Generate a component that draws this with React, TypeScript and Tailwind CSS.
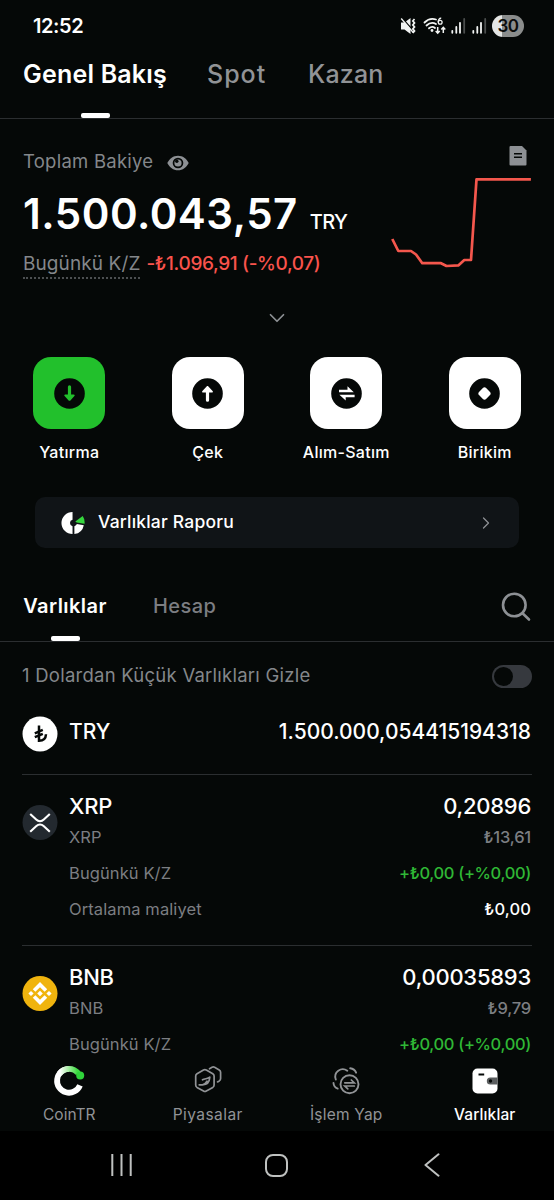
import React from 'react';
import { ChevronDown, ChevronRight } from 'lucide-react';

const actions = [
  { label: 'Yatırma', icon: 'down' },
  { label: 'Çek', icon: 'up' },
  { label: 'Alım-Satım', icon: 'swap' },
  { label: 'Birikim', icon: 'diamond' },
];

const assets = [
  { symbol: 'XRP', amount: '0,20896', value: '₺13,61', pnl: '+₺0,00 (+%0,00)', cost: '₺0,00' },
  { symbol: 'BNB', amount: '0,00035893', value: '₺9,79', pnl: '+₺0,00 (+%0,00)', cost: null },
];

const navItems = [
  { label: 'CoinTR', className: 'text-[#919396]' },
  { label: 'Piyasalar', className: 'tracking-[0.45px] text-[#919396]' },
  { label: 'İşlem Yap', className: 'tracking-[0.2px] text-[#919396]' },
  { label: 'Varlıklar', className: 'font-medium tracking-[0.1px] text-white' },
];

function StatusIcons() {
  return (
    <svg width="93" height="26" viewBox="0 0 93 26" fill="none">
      {/* Muted speaker */}
      <path d="M2 9.500h3.500l6-4.500v16L5.500 16.500H2z" fill="#f2f4f3" />
      <path d="M3.500 5.500l11 12.500" stroke="#050807" strokeWidth="1.500" />
      <path d="M2.200 5.500l12 14" stroke="#f2f4f3" strokeWidth="1.300" />
      <path d="M15.500 6l-1.700 1.900 1.700 2-1.700 2 1.700 2-1.700 2 1.700 2-1.700 2" stroke="#f2f4f3" strokeWidth="1.700" />
      {/* Wifi */}
      <path d="M25.500 9.500c3.500-3.500 7.500-4.300 11.500-3M27.500 12.500c3-2.800 6.500-3.300 9.500-1.500M30 15.300c1.800-1.500 4.200-1.700 6-.3" stroke="#f2f4f3" strokeWidth="1.800" strokeLinecap="round" />
      <circle cx="33" cy="17.500" r="1.400" fill="#f2f4f3" />
      <path d="M42.200 5.300c-2-.2-3 1.800-3 4" stroke="#f2f4f3" strokeWidth="1.400" />
      <circle cx="41.200" cy="9.300" r="1.900" stroke="#f2f4f3" strokeWidth="1.300" />
      <path d="M38.700 14v6M36.700 18l2 2.200 2-2.200M44.300 20v-5.500M42.300 16.500l2-2.200 2 2.200" stroke="#f2f4f3" strokeWidth="1.500" />
      {/* Signal bars */}
      <path d="M53.300 17.800v2M57.300 14v5.800M61 9.800v10" stroke="#f2f4f3" strokeWidth="1.800" strokeLinecap="round" />
      <path d="M65.200 6v13.800" stroke="#4b4e4d" strokeWidth="1.800" strokeLinecap="round" />
      <path d="M74.300 17.800v2M78.300 14v5.800M82 9.800v10" stroke="#f2f4f3" strokeWidth="1.800" strokeLinecap="round" />
      <path d="M86.200 6v13.800" stroke="#4b4e4d" strokeWidth="1.800" strokeLinecap="round" />
    </svg>
  );
}

function ActionGlyph({ icon }: { icon: string }) {
  const color = icon === 'down' ? '#22c02c' : '#ffffff';
  return (
    <svg width="31" height="31" viewBox="0 0 31 31" fill="none">
      <circle cx="15.500" cy="15.500" r="15.300" fill="#050807" />
      {icon === 'down' && (
        <path d="M13.900 8.800a1.500 1.500 0 0 1 3.200 0v7.700h2.600c1 0 1.300.9.700 1.600l-4 4.300c-.5.600-1.300.6-1.800 0l-4-4.300c-.6-.7-.3-1.600.7-1.600h2.600z" fill={color} />
      )}
      {icon === 'up' && (
        <path d="M13.900 22.200a1.500 1.500 0 0 0 3.200 0v-7.700h2.800c1 0 1.300-.9.700-1.600l-4.200-4.400c-.5-.6-1.300-.6-1.800 0l-4.200 4.400c-.6.7-.3 1.600.7 1.600h2.800z" fill={color} />
      )}
      {icon === 'swap' && (
        <path d="M8 11.700h8.500V8.300l6.300 5.900H8zM23.600 16.800H8.400l6.300 5.800V19.300h8.900z" fill={color} />
      )}
      {icon === 'diamond' && (
        <path d="M13.900 10l-3.900 3.900c-.9.900-.9 2.300 0 3.200l3.900 3.900c.9.900 2.300.9 3.200 0l3.900-3.900c.9-.9.900-2.300 0-3.200l-3.900-3.900c-.9-.9-2.300-.9-3.200 0z" fill={color} />
      )}
    </svg>
  );
}

function CoinIcon({ symbol }: { symbol: string }) {
  if (symbol === 'XRP') {
    return (
      <svg width="36" height="36" viewBox="0 0 36 36" fill="none">
        <circle cx="18" cy="17.500" r="17.500" fill="#23292f" />
        <path d="M8.200 9l6 5.600c2.200 2.100 5.400 2.100 7.600 0l6-5.600M8.200 26.700l6.200-5.700c2-1.900 5.200-1.900 7.200 0l6.200 5.700" stroke="#ffffff" strokeWidth="2.100" />
      </svg>
    );
  }
  if (symbol === 'BNB') {
    return (
      <svg width="36" height="36" viewBox="0 0 36 36" fill="#ffffff">
        <circle cx="18" cy="17.500" r="17.500" fill="#f0b40e" />
        <path d="M18 6l7.200 7.200-2.600 2.600-4.600-4.600-4.600 4.600-2.600-2.600zM18 29l-7.200-7.200 2.600-2.600 4.600 4.600 4.600-4.600 2.600 2.600zM18 14.700l2.800 2.800-2.800 2.800-2.800-2.800zM9 14.900l2.600 2.600L9 20.100l-2.600-2.600zM27 14.900l2.600 2.600-2.600 2.600-2.600-2.600z" />
      </svg>
    );
  }
  return (
    <svg width="36" height="36" viewBox="0 0 36 36" fill="none">
      <circle cx="18" cy="18" r="17.500" fill="#ffffff" />
      <path d="M17 9.500v15.300c4.500 0 6.800-2.300 7-6.500M12.800 17.300l8-3.400M12.800 21.200l8-3.400" stroke="#050807" strokeWidth="2.500" />
    </svg>
  );
}

function NavIcon({ name }: { name: string }) {
  if (name === 'CoinTR') {
    return (
      <svg width="32" height="32" viewBox="0 0 32 32" fill="none">
        <defs>
          <linearGradient id="ring" x1="7" y1="8" x2="24" y2="8" gradientUnits="userSpaceOnUse">
            <stop stopColor="#ffffff" />
            <stop offset="0.500" stopColor="#a6eea2" />
            <stop offset="1" stopColor="#3fdc43" />
          </linearGradient>
        </defs>
        <path d="M16 3.900a11.900 11.900 0 1 0 11 16.400" stroke="#ffffff" strokeWidth="5.800" />
        <path d="M6.500 8.500A11.900 11.900 0 0 1 25.300 8.300" stroke="url(#ring)" strokeWidth="5.800" />
        <circle cx="27.200" cy="10.600" r="4" fill="#2fd33a" />
      </svg>
    );
  }
  if (name === 'Piyasalar') {
    return (
      <svg width="32" height="32" viewBox="0 0 32 32" fill="none" stroke="#919396" strokeWidth="1.700" strokeLinecap="round" strokeLinejoin="round">
        <path d="M11.500 5.100q1.400-.8 2.800 0l6.500 3.700q1.300.8 1.300 2.300v9q0 1.500-1.300 2.300l-6.500 3.700q-1.400.8-2.800 0l-6.500-3.700q-1.300-.8-1.300-2.300v-9q0-1.500 1.300-2.300z" />
        <path d="M17.500 3.800l2.500-1.500q1.300-.7 2.600 0l4.600 2.600q1.400.8 1.400 2.300v6.400q0 1.500-1.300 2.300l-1.800 1" />
        <path d="M7.200 19.800h3.300c4.300 0 7-2.800 7.300-7.600-2 1.800-5 1.200-7.300 2.600M10.500 19.800c2.300-.6 3.500-1.800 4.500-3.600" />
      </svg>
    );
  }
  if (name === 'İşlem Yap') {
    return (
      <svg width="32" height="32" viewBox="0 0 32 32" fill="none" stroke="#919396" strokeWidth="1.900" strokeLinecap="round">
        <circle cx="19.500" cy="19.200" r="9" />
        <path d="M5.800 14.500A7.500 7.500 0 0 1 17.300 5.800M20.200 3.300c3 .3 4.900 1.900 5.900 4.400M3.500 18c.2 2.800 1.700 4.700 4.200 5.600" />
        <path d="M14.800 17.800h9.500l-3-2.800M24.300 21H14.800l3 2.800" strokeWidth="1.700" />
      </svg>
    );
  }
  return (
    <svg width="32" height="32" viewBox="0 0 32 32" fill="none">
      <rect x="3.500" y="3.500" width="25" height="25" rx="5" fill="#ffffff" />
      <path d="M9.500 9.500h5.700" stroke="#050807" strokeWidth="2" />
      <path d="M28.500 12.500h-7.200a3.500 3.500 0 0 0 0 7h7.200z" fill="#5a5d5e" />
      <circle cx="21.500" cy="16" r="1.700" fill="#050807" />
    </svg>
  );
}

export default function App() {
  return (
    <div className="flex h-[1200px] w-[554px] flex-col overflow-hidden bg-[#050807] font-['Inter',sans-serif] text-white">
      {/* Status bar */}
      <div className="flex h-[52px] shrink-0 items-center justify-between pl-[33px] pr-[30px]">
        <span className="text-[20px] font-semibold leading-[52px] tracking-[-0.4px]">12:52</span>
        <div className="flex items-center">
          <StatusIcons />
          <div className="flex h-[22px] w-[32px] items-center justify-center rounded-full bg-linear-to-r from-[#e4e6e5] from-30% to-[#8b8d8c] to-30% text-[17px] font-semibold leading-none tracking-[-0.5px] text-[#0a0c0b]">
            30
          </div>
        </div>
      </div>

      {/* Main tabs */}
      <div className="flex h-[67px] shrink-0 border-b border-[#2b2e30] pl-[23px] text-[25px] leading-[45px]">
        <div className="flex w-[144px] flex-col items-center justify-between">
          <span className="whitespace-nowrap font-semibold tracking-[0.2px]">Genel Bakış</span>
          <span className="h-[5px] w-[29px] rounded-[2px] bg-white" />
        </div>
        <span className="ml-[40px] w-[60px] font-medium tracking-[1px] text-[#919396]">Spot</span>
        <span className="ml-[41px] font-medium tracking-[0.2px] text-[#919396]">Kazan</span>
      </div>

      {/* Balance */}
      <div className="flex h-[238px] shrink-0 flex-col">
        <div className="flex h-[172px] justify-between pl-[23px] pr-[22px]">
          <div className="pt-[30px]">
            <div className="flex h-[25px] items-center text-[18.5px] tracking-[0.25px] text-[#84878b]">
              Toplam Bakiye
              <svg className="ml-[14px] mt-[2px]" width="22" height="16" viewBox="0 0 22 16" fill="none">
                <path d="M.3 8C2.500 3.500 6.300.7 11 .7S19.500 3.500 21.700 8c-2.200 4.500-6 7.300-10.700 7.300S2.500 12.500.3 8z" fill="#8d9094" />
                <circle cx="11" cy="8" r="5.300" fill="#050807" />
                <circle cx="11" cy="8" r="3.600" fill="#8d9094" />
                <circle cx="9.800" cy="6.300" r="1.700" fill="#050807" />
              </svg>
            </div>
            <div className="mt-[11px] flex h-[58px] items-baseline whitespace-nowrap leading-[58px]">
              <span className="text-[42px] font-semibold tracking-[0.5px]">1.500.043,57</span>
              <span className="ml-[12px] text-[20px] font-medium tracking-[-0.6px]">TRY</span>
            </div>
            <div className="mt-[6px] flex whitespace-nowrap text-[19px] leading-[30px]">
              <span className="h-[30px] border-b-2 border-dotted border-[#4c4f51] tracking-[0.1px] text-[#84878b]">Bugünkü K/Z</span>
              <span className="ml-[6px] font-medium tracking-[-0.37px] text-[#f9534c]">-₺1.096,91 (-%0,07)</span>
            </div>
          </div>
          <div className="flex flex-col items-end pt-[27px]">
            <svg className="mr-[5px]" width="18" height="20" viewBox="0 0 18 20">
              <path d="M1.500 0h11.500l4.500 4.500v14q0 1-1 1h-15q-1 0-1-1V1q0-1 1-1z" fill="#8d9094" />
              <path d="M5 7.800h8M5 11.200h8" stroke="#050807" strokeWidth="1.500" />
            </svg>
            <svg className="mt-[9px]" width="142" height="96" viewBox="0 0 142 96" fill="none">
              <path d="M2.300 64l6 12H21l5 3.500 6.300 8.700h18.700l5.500 2.800 11.800-.6 6-5.400h6.700l5.500-80.600h54.400" stroke="#f4574d" strokeWidth="2.700" strokeLinejoin="round" />
            </svg>
          </div>
        </div>
        <div className="flex justify-center pt-[14px]">
          <ChevronDown size={26} strokeWidth={1.600} className="text-[#8d9094]" />
        </div>
      </div>

      {/* Quick actions */}
      <div className="grid h-[140px] shrink-0 grid-cols-4">
        {actions.map((action) => (
          <div key={action.label} className="flex flex-col items-center">
            <div
              className={`flex h-[72px] w-[72px] items-center justify-center rounded-[18px] ${
                action.icon === 'down' ? 'bg-[#22c02c]' : 'bg-white'
              }`}
            >
              <ActionGlyph icon={action.icon} />
            </div>
            <span className="mt-[11px] text-[16px] font-medium leading-6 tracking-[0.28px]">{action.label}</span>
          </div>
        ))}
      </div>

      {/* Report */}
      <div className="ml-[35px] flex h-[51px] w-[484px] shrink-0 items-center rounded-[10px] bg-[#101417] pl-[26px] pr-[23px]">
        <svg width="24" height="24" viewBox="0 0 26 26" fill="none">
          <path d="M12.500 1v8.500a3.600 3.600 0 0 0 0 7V25A12 12 0 0 1 12.500 1z" fill="#ffffff" />
          <path d="M14.500 16.500c1.300-.3 2.200-1.200 2.600-2.300l7.600 1.200A12 12 0 0 1 14.500 25z" fill="#ffffff" />
          <path d="M15.500 11.500l8-6a12 12 0 0 1 2 8.200l-8.500-1.200z" fill="#35d63d" />
        </svg>
        <span className="mb-[1px] ml-[13px] text-[17.500px] font-medium tracking-[0.2px]">Varlıklar Raporu</span>
        <ChevronRight size={20} strokeWidth={1.500} className="ml-auto text-[#8d9094]" />
      </div>

      {/* Asset tabs */}
      <div className="flex h-[94px] shrink-0 border-b border-[#2b2e30] pl-[23px] pr-[22px] pt-[42px] text-[20px] leading-[32px]">
        <div className="flex w-[84px] flex-col items-center justify-between">
          <span className="font-semibold tracking-[0.45px]">Varlıklar</span>
          <span className="h-[5px] w-[29px] rounded-[2px] bg-white" />
        </div>
        <span className="ml-[46px] font-medium tracking-[0.45px] text-[#7c7e82]">Hesap</span>
        <svg className="ml-auto mr-[1px] mt-[2px]" width="30" height="30" viewBox="0 0 30 30" fill="none" stroke="#8d9094" strokeWidth="2.600" strokeLinecap="round">
          <circle cx="13.300" cy="13" r="11.300" />
          <path d="M21.500 21.200l6.500 6.300" />
        </svg>
      </div>

      {/* Hide small balances */}
      <div className="flex h-[67px] shrink-0 items-center justify-between pl-[22px] pr-[22px]">
        <span className="text-[18.500px] tracking-[0.25px] text-[#84878b]">1 Dolardan Küçük Varlıkları Gizle</span>
        <div className="mt-[1px] flex h-[23px] w-[40px] items-center rounded-full bg-[#36393e] pl-[2px]">
          <span className="h-[19px] w-[19px] rounded-full bg-[#050807]" />
        </div>
      </div>

      <div className="mx-[22px] flex h-[66px] shrink-0 border-b border-[#2b2e30]">
        <div className="mt-[7px]">
          <CoinIcon symbol="TRY" />
        </div>
        <div className="ml-[11px] flex h-[45px] flex-1 items-center justify-between pr-[1px] text-[21px] font-medium">
          <span>TRY</span>
          <span>1.500.000,054415194318</span>
        </div>
      </div>

      {/* Assets */}
      <div className="mx-[22px] flex h-[285px] shrink-0 flex-col overflow-hidden">
        {assets.map((asset) => (
          <div key={asset.symbol} className="flex h-[171px] shrink-0 border-b border-[#2b2e30]">
            <div className="mt-[30px]">
              <CoinIcon symbol={asset.symbol} />
            </div>
            <div className="ml-[11px] flex-1 pr-[1px] pt-[15px] text-[16.500px] tracking-[0.1px] text-[#7c7e82]">
              <div className="flex h-[32px] items-center justify-between text-[22px] font-medium tracking-[-0.25px] text-white">
                <span>{asset.symbol}</span>
                <span>{asset.amount}</span>
              </div>
              <div className="flex h-[30px] items-center justify-between">
                <span>{asset.symbol}</span>
                <span className="font-medium tracking-[-0.2px]">{asset.value}</span>
              </div>
              <div className="mt-[3px] flex h-[36px] items-center justify-between">
                <span>Bugünkü K/Z</span>
                <span className="font-medium tracking-[-0.35px] text-[#2fb735]">{asset.pnl}</span>
              </div>
              {asset.cost && (
                <div className="flex h-[36px] items-center justify-between">
                  <span>Ortalama maliyet</span>
                  <span className="font-medium text-white">{asset.cost}</span>
                </div>
              )}
            </div>
          </div>
        ))}
      </div>

      {/* Bottom nav */}
      <div className="grid h-[71px] shrink-0 grid-cols-4 pt-[5px]">
        {navItems.map((item) => (
          <div key={item.label} className="flex flex-col items-center">
            <NavIcon name={item.label} />
            <span className={`mt-[7px] text-[15.500px] leading-[22px] ${item.className}`}>{item.label}</span>
          </div>
        ))}
      </div>

      {/* System navigation */}
      <div className="flex h-[70px] shrink-0 items-center bg-black pb-[2px]">
        <svg className="ml-[109px]" width="24" height="24" viewBox="0 0 24 24" stroke="#bfc1c0" strokeWidth="2">
          <path d="M3.300 1v22M12.500 1v22M21.700 1v22" />
        </svg>
        <div className="ml-[132px] h-[23px] w-[23px] rounded-[8px] border-2 border-[#bfc1c0]" />
        <svg className="ml-[136px]" width="16" height="24" viewBox="0 0 16 24" fill="none" stroke="#bfc1c0" strokeWidth="2" strokeLinecap="round" strokeLinejoin="round">
          <path d="M14.500 1.300L1.500 12l13 10.700" />
        </svg>
      </div>
    </div>
  );
}
